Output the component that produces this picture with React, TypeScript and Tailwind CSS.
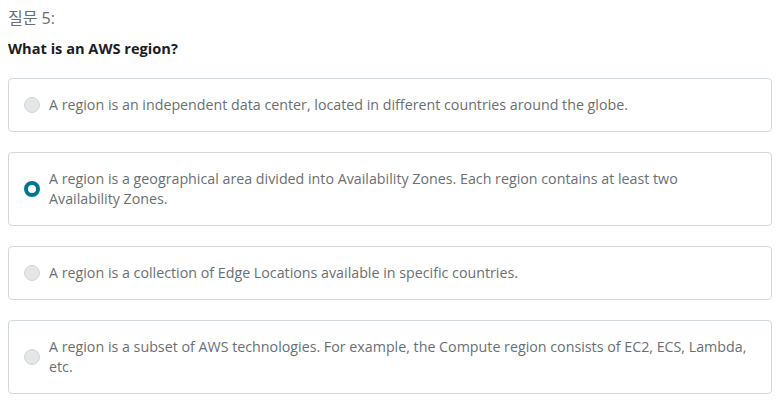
import React from "react";

const options = [
  { text: "A region is an independent data center, located in different countries around the globe.", selected: false },
  { text: "A region is a geographical area divided into Availability Zones. Each region contains at least two Availability Zones.", selected: true },
  { text: "A region is a collection of Edge Locations available in specific countries.", selected: false },
  { text: "A region is a subset of AWS technologies. For example, the Compute region consists of EC2, ECS, Lambda, etc.", selected: false },
];

function Radio({ selected }: { selected: boolean }) {
  if (selected) {
    return <span className="block w-4 h-4 shrink-0 rounded-full border-[4px] border-[#007791] bg-white" />;
  }
  return <span className="block w-4 h-4 shrink-0 rounded-full border border-[#d1d7dc] bg-[#e4e6e8]" />;
}

export default function App() {
  return (
    <div className="w-[784px] h-[407px] bg-white pl-2 pr-3 pt-[8px]" style={{ fontFamily: '"Open Sans", "Noto Sans CJK KR", sans-serif' }}>
      <div className="text-[16px] leading-[20px] text-[#6a6f73]">질문 5:</div>
      <div className="mt-[10px] text-[14.6px] leading-[20px] font-bold text-[#1c1d1f]">What is an AWS region?</div>
      <div className="mt-[20px] flex flex-col gap-[20px]">
        {options.map((o, i) => (
          <div key={i} className="flex items-center gap-[9px] border border-[#d1d7dc] rounded-[4px] px-[15px] py-[16px]">
            <Radio selected={o.selected} />
            <span className="text-[14.25px] leading-[20px] text-[#6a6f73] pr-[6px]">{o.text}</span>
          </div>
        ))}
      </div>
    </div>
  );
}
